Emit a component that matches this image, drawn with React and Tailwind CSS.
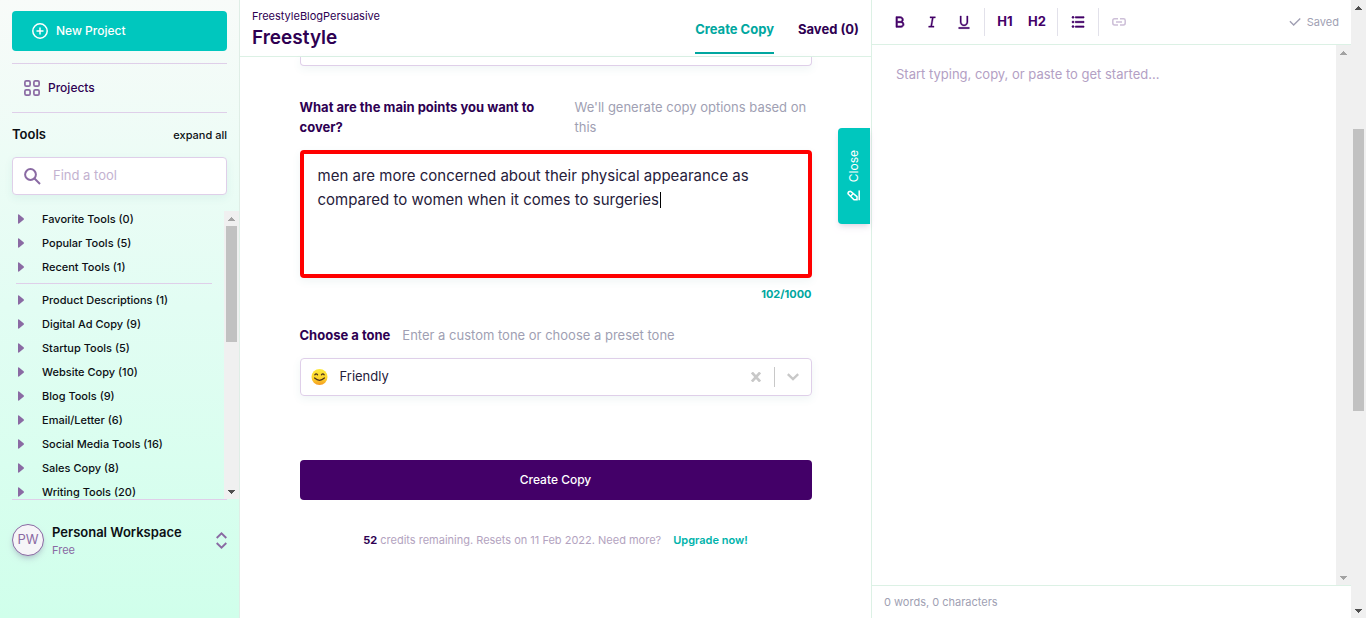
import React from "react";
import {
  RiBold,
  RiItalic,
  RiUnderline,
  RiListUnordered,
  RiCheckLine,
} from "react-icons/ri";

const quickTools = ["Favorite Tools (0)", "Popular Tools (5)", "Recent Tools (1)"];

const categories = [
  "Product Descriptions (1)",
  "Digital Ad Copy (9)",
  "Startup Tools (5)",
  "Website Copy (10)",
  "Blog Tools (9)",
  "Email/Letter (6)",
  "Social Media Tools (16)",
  "Sales Copy (8)",
  "Writing Tools (20)",
];

function Arrow({ up }) {
  return (
    <svg width="7" height="4" viewBox="0 0 7 4" fill="currentColor" aria-hidden="true" shapeRendering="crispEdges">
      {up ? (
        <path d="M3 0h1v1h1v1h1v1h1v1H0V3h1V2h1V1h1z" />
      ) : (
        <path d="M0 0h7v1H6v1H5v1H4v1H3V3H2V2H1V1H0z" />
      )}
    </svg>
  );
}

function Scrollbar({ upClass, downClass, children }) {
  return (
    <div className="flex w-[15px] shrink-0 flex-col items-center bg-[#f0f0f0]" aria-hidden="true">
      <span className={`flex h-[15px] items-center justify-center ${upClass}`}>
        <Arrow up />
      </span>
      <div className="min-h-0 w-full flex-1 px-[2px]">{children}</div>
      <span className={`flex h-[15px] items-center justify-center ${downClass}`}>
        <Arrow />
      </span>
    </div>
  );
}

function ToolItem({ label }) {
  return (
    <li>
      <a href="#" className="flex h-4 items-center pl-[18px] text-[11px] leading-4 font-medium text-[#0c0f14]">
        <svg width="6" height="10" viewBox="0 0 6 10" className="mr-[18px] text-[#8a6aa3]" aria-hidden="true">
          <path d="M0 1Q0 0 1 .4L5.600 4.200Q6.300 5 5.600 5.800L1 9.600Q0 10 0 9z" fill="currentColor" />
        </svg>
        {label}
      </a>
    </li>
  );
}

function Sidebar() {
  return (
    <aside className="flex w-60 shrink-0 flex-col border-r border-[#dfeee6] bg-linear-to-b from-[#f8fbf9] via-[#e2fdf3] to-[#d0ffeb] pt-[11px]">
      <div className="px-3">
        <button type="button" className="flex h-10 w-full items-center gap-2 rounded bg-[#00c7be] pl-5 text-[12px] font-medium text-white">
          <svg width="16" height="16" viewBox="0 0 16 16" fill="none" stroke="currentColor" strokeWidth="1.500" aria-hidden="true">
            <circle cx="8" cy="8" r="7.200" />
            <path d="M8 4.500v7M4.500 8h7" />
          </svg>
          New Project
        </button>
        <nav className="mt-3 border-y border-[#dfcfe9]">
          <a href="#" className="flex h-12 items-center gap-2 pl-3 text-[12px] font-medium text-[#2e0052]">
            <svg width="16" height="16" viewBox="0 0 16 16" fill="none" stroke="#8a6aa3" strokeWidth="1.700" aria-hidden="true">
              <rect x=".9" y=".9" width="5.200" height="5.200" rx="1.400" />
              <rect x="9.900" y=".9" width="5.200" height="5.200" rx="1.400" />
              <rect x=".9" y="9.900" width="5.200" height="5.200" rx="1.400" />
              <rect x="9.900" y="9.900" width="5.200" height="5.200" rx="1.400" />
            </svg>
            Projects
          </a>
        </nav>
        <div className="flex h-11 items-center justify-between text-[#0c0f14]">
          <h2 className="text-[13px] font-semibold">Tools</h2>
          <button type="button" className="text-[11px] font-medium">expand all</button>
        </div>
        <label className="flex h-[38px] items-center gap-3 rounded border border-[#dfcfe9] bg-white pl-[11px] shadow-[0_3px_8px_#2e7f7a14]">
          <svg width="17" height="17" viewBox="0 0 17 17" fill="none" stroke="#8a6aa3" strokeWidth="2" className="shrink-0" aria-hidden="true">
            <circle cx="6.500" cy="6.500" r="5.400" />
            <path d="M10.500 10.500l5.500 5.500" />
          </svg>
          <input type="text" aria-label="Find a tool" placeholder="Find a tool" className="w-full min-w-0 bg-transparent text-[13px] outline-none placeholder:text-[#c3b2d0]" />
        </label>
      </div>
      <div className="mt-4 flex min-h-0 flex-1">
        <div className="min-w-0 flex-1 overflow-hidden">
          <ul className="flex flex-col gap-2">
            {quickTools.map((t) => (
              <ToolItem key={t} label={t} />
            ))}
          </ul>
          <hr className="my-2 mr-3 ml-4 border-[#dfcfe9]" />
          <ul className="flex flex-col gap-2">
            {categories.map((t) => (
              <ToolItem key={t} label={t} />
            ))}
          </ul>
        </div>
        <Scrollbar upClass="text-[#a3a3a3]" downClass="text-[#505050]">
          <div className="h-[45%] bg-[#c1c1c1]" />
        </Scrollbar>
      </div>
      <div className="mx-3 flex h-[119px] items-start gap-2 border-t border-[#dfcfe9] pt-6">
        <span className="flex size-8 items-center justify-center rounded-full border border-[#8a6aa3] bg-[#f6f5f8] text-[13px] text-[#8a6aa3] shadow-md shadow-[#2e0052]/15">
          PW
        </span>
        <div className="-mt-1 flex-1">
          <p className="text-[13px] leading-6 font-semibold text-[#0c0f14]">Personal Workspace</p>
          <p className="text-[11px] leading-3 text-[#8a6aa3]">Free</p>
        </div>
        <button type="button" aria-label="Switch workspace" className="flex h-8 items-center text-[#8a6aa3]">
          <svg width="11" height="17" viewBox="0 0 11 17" fill="none" stroke="currentColor" strokeWidth="1.900" aria-hidden="true">
            <path d="M.7 6l4.800-4.600L10.300 6M.7 11l4.800 4.600L10.300 11" />
          </svg>
        </button>
      </div>
    </aside>
  );
}

function Composer() {
  return (
    <main className="relative flex min-w-0 flex-1 flex-col">
      <header className="flex h-[57px] shrink-0 justify-between border-b border-[#dcf1e5] px-3 text-[#2e0052]">
        <div className="pt-2">
          <p className="text-[11px] leading-4">FreestyleBlogPersuasive</p>
          <h1 className="text-[19px] leading-7 font-semibold">Freestyle</h1>
        </div>
        <nav className="flex h-[54px] gap-6 text-[13px] font-bold">
          <a href="#" className="flex items-center border-b-2 border-[#00a7a0] pt-2 text-[#00a7a0]">Create Copy</a>
          <a href="#" className="flex items-center border-b-2 border-transparent pt-2">Saved (0)</a>
        </nav>
      </header>
      <form className="mx-auto w-full max-w-lg text-[13px]">
        <div className="h-[9px] rounded-b border border-t-0 border-[#dfcfe9] shadow-[0_3px_8px_#2e7f7a14]" />
        <div className="mt-[31px] flex gap-3 leading-5">
          <label htmlFor="points" className="w-[263px] font-bold text-[#2e0052]">
            What are the main points you want to cover?
          </label>
          <p className="flex-1 text-[#a09fb3]">We&apos;ll generate copy options based on this</p>
        </div>
        <div className="relative mt-[13px]">
          <textarea
            id="points"
            defaultValue="men are more concerned about their physical appearance as compared to women when it comes to surgeries"
            className="block h-32 w-full resize-none rounded border-4 border-[#ff0000] px-3.5 py-2.5 text-[15px] leading-6 text-[#26203a] shadow-[0_3px_8px_#2e7f7a14] outline-none"
          />
          <span className="absolute top-[42px] left-[360px] h-4 w-px bg-black" aria-hidden="true" />
        </div>
        <p className="mt-2 text-right text-[11px] leading-4 font-bold text-[#00a7a0]">102/1000</p>
        <div className="mt-[23px] flex gap-3 leading-5">
          <label htmlFor="tone" className="font-bold text-[#2e0052]">Choose a tone</label>
          <p className="text-[#a09fb3]">Enter a custom tone or choose a preset tone</p>
        </div>
        <div className="mt-[13px] flex h-[38px] items-center rounded border border-[#dfcfe9] pr-3 pl-2.5 shadow-[0_3px_8px_#2e7f7a14]">
          <svg width="17" height="17" viewBox="0 0 17 17" aria-hidden="true">
            <defs>
              <linearGradient id="face" x1="0" y1="0" x2="0" y2="1">
                <stop offset="0" stopColor="#fdea3c" />
                <stop offset=".6" stopColor="#fcd32b" />
                <stop offset="1" stopColor="#f59a22" />
              </linearGradient>
            </defs>
            <circle cx="8.500" cy="8" r="8" fill="url(#face)" />
            <path d="M3.800 5.800q1.400-2 2.800 0M10.400 5.800q1.400-2 2.800 0M3.600 9q4.900 4.600 9.800 0" fill="none" stroke="#4a331b" strokeWidth="1.200" strokeLinecap="round" />
          </svg>
          <input id="tone" type="text" defaultValue="Friendly" className="ml-3 min-w-0 flex-1 text-[13px] text-[#26203a] outline-none" />
          <button type="button" aria-label="Clear tone" className="text-[#c8c8c8]">
            <svg width="10" height="10" viewBox="0 0 10 10" fill="none" stroke="currentColor" strokeWidth="2.700" aria-hidden="true">
              <path d="M.9.5l8.200 9M9.100.5L.9 9.500" />
            </svg>
          </button>
          <span className="mr-3 ml-[13px] h-5 w-px bg-[#c8c8c8]" />
          <button type="button" aria-label="Open tones" className="text-[#c8c8c8]">
            <svg width="12" height="8" viewBox="0 0 12 8" fill="none" stroke="currentColor" strokeWidth="2.400" aria-hidden="true">
              <path d="M.8 1.200L6 6.200l5.200-5" />
            </svg>
          </button>
        </div>
        <button type="button" className="mt-16 h-10 w-full rounded bg-[#430068] text-[12px] font-medium text-white">Create Copy</button>
        <p className="mt-8 text-center text-[11px] leading-4 text-[#b3a3c0]">
          <b className="text-[#2e0052]">52</b> credits remaining. Resets on 11 Feb 2022. Need more?
          <a href="#" className="ml-3 font-semibold text-[#00b3ab]">Upgrade now!</a>
        </p>
      </form>
      <button type="button" className="absolute top-32 right-px flex h-24 w-8 items-center justify-center rounded-l bg-[#00c7be] text-white shadow-md shadow-[#2e0052]/10">
        <span className="flex rotate-180 items-center gap-2 text-[12px] [writing-mode:vertical-rl]">
          <svg width="13" height="11" viewBox="0 0 13 11" fill="none" stroke="currentColor" strokeWidth="1.500" className="rotate-180" aria-hidden="true">
            <path d="M1 3.500Q1 1 3.500 1L10 6.500V9.500H7z" />
            <path d="M3.500 6L6.500 3M12.200 0v10" />
          </svg>
          Close
        </span>
      </button>
    </main>
  );
}

function ToolbarButton({ label, disabled, children }) {
  return (
    <button
      type="button"
      aria-label={label}
      disabled={disabled}
      className="flex size-8 items-center justify-center text-[#430068] disabled:text-[#cdbfd8]"
    >
      {children}
    </button>
  );
}

function Separator() {
  return <span className="mx-1 h-7 w-px bg-[#e2e1ea]" />;
}

function Editor() {
  return (
    <section className="flex w-[480px] shrink-0 flex-col border-l border-[#dcf1e5]">
      <div className="flex h-[45px] shrink-0 items-center border-b border-[#dcf1e5] pr-3 pl-3">
        <ToolbarButton label="Bold"><RiBold size={16} stroke="currentColor" strokeWidth={1} /></ToolbarButton>
        <ToolbarButton label="Italic"><RiItalic size={16} stroke="currentColor" strokeWidth={0.5} /></ToolbarButton>
        <ToolbarButton label="Underline"><RiUnderline size={16} stroke="currentColor" strokeWidth={0.5} /></ToolbarButton>
        <Separator />
        <ToolbarButton label="Heading 1"><span className="text-[13px] font-bold">H1</span></ToolbarButton>
        <ToolbarButton label="Heading 2"><span className="text-[13px] font-bold">H2</span></ToolbarButton>
        <Separator />
        <ToolbarButton label="Bulleted list"><RiListUnordered size={16} stroke="currentColor" strokeWidth={1} /></ToolbarButton>
        <Separator />
        <ToolbarButton label="Link" disabled>
          <svg width="14" height="8" viewBox="0 0 14 8" fill="none" stroke="currentColor" strokeWidth="1.500" aria-hidden="true">
            <path d="M6 .8H2.500Q.8.800.8 2.500v2.600Q.8 7 2.500 7H6M8 .8h3.500q1.700 0 1.700 1.700v2.600q0 1.900-1.700 1.900H8M4 4h6" />
          </svg>
        </ToolbarButton>
        <p className="ml-auto flex items-center gap-1 text-[11px] text-[#a09fb3]">
          <RiCheckLine size={16} />
          Saved
        </p>
      </div>
      <div className="flex min-h-0 flex-1">
        <textarea
          aria-label="Document"
          placeholder="Start typing, copy, or paste to get started..."
          className="min-w-0 flex-1 resize-none px-6 py-[19px] text-[13px] leading-5 outline-none placeholder:text-[#b3a0c4]"
        />
        <Scrollbar upClass="text-[#a3a3a3]" downClass="text-[#a3a3a3]" />
      </div>
      <p className="flex h-[33px] shrink-0 items-center border-t border-[#dcf1e5] pl-3 text-[11px] text-[#a09fb3]">
        0 words, 0 characters
      </p>
    </section>
  );
}

export default function App() {
  return (
    <div className="flex h-screen overflow-hidden bg-white font-['Inter',sans-serif]">
      <Sidebar />
      <Composer />
      <Editor />
      <Scrollbar upClass="text-[#505050]" downClass="text-[#505050]">
        <div className="flex h-full flex-col">
          <div className="h-[114px] shrink-0" />
          <div className="h-[48%] bg-[#c1c1c1]" />
        </div>
      </Scrollbar>
    </div>
  );
}
